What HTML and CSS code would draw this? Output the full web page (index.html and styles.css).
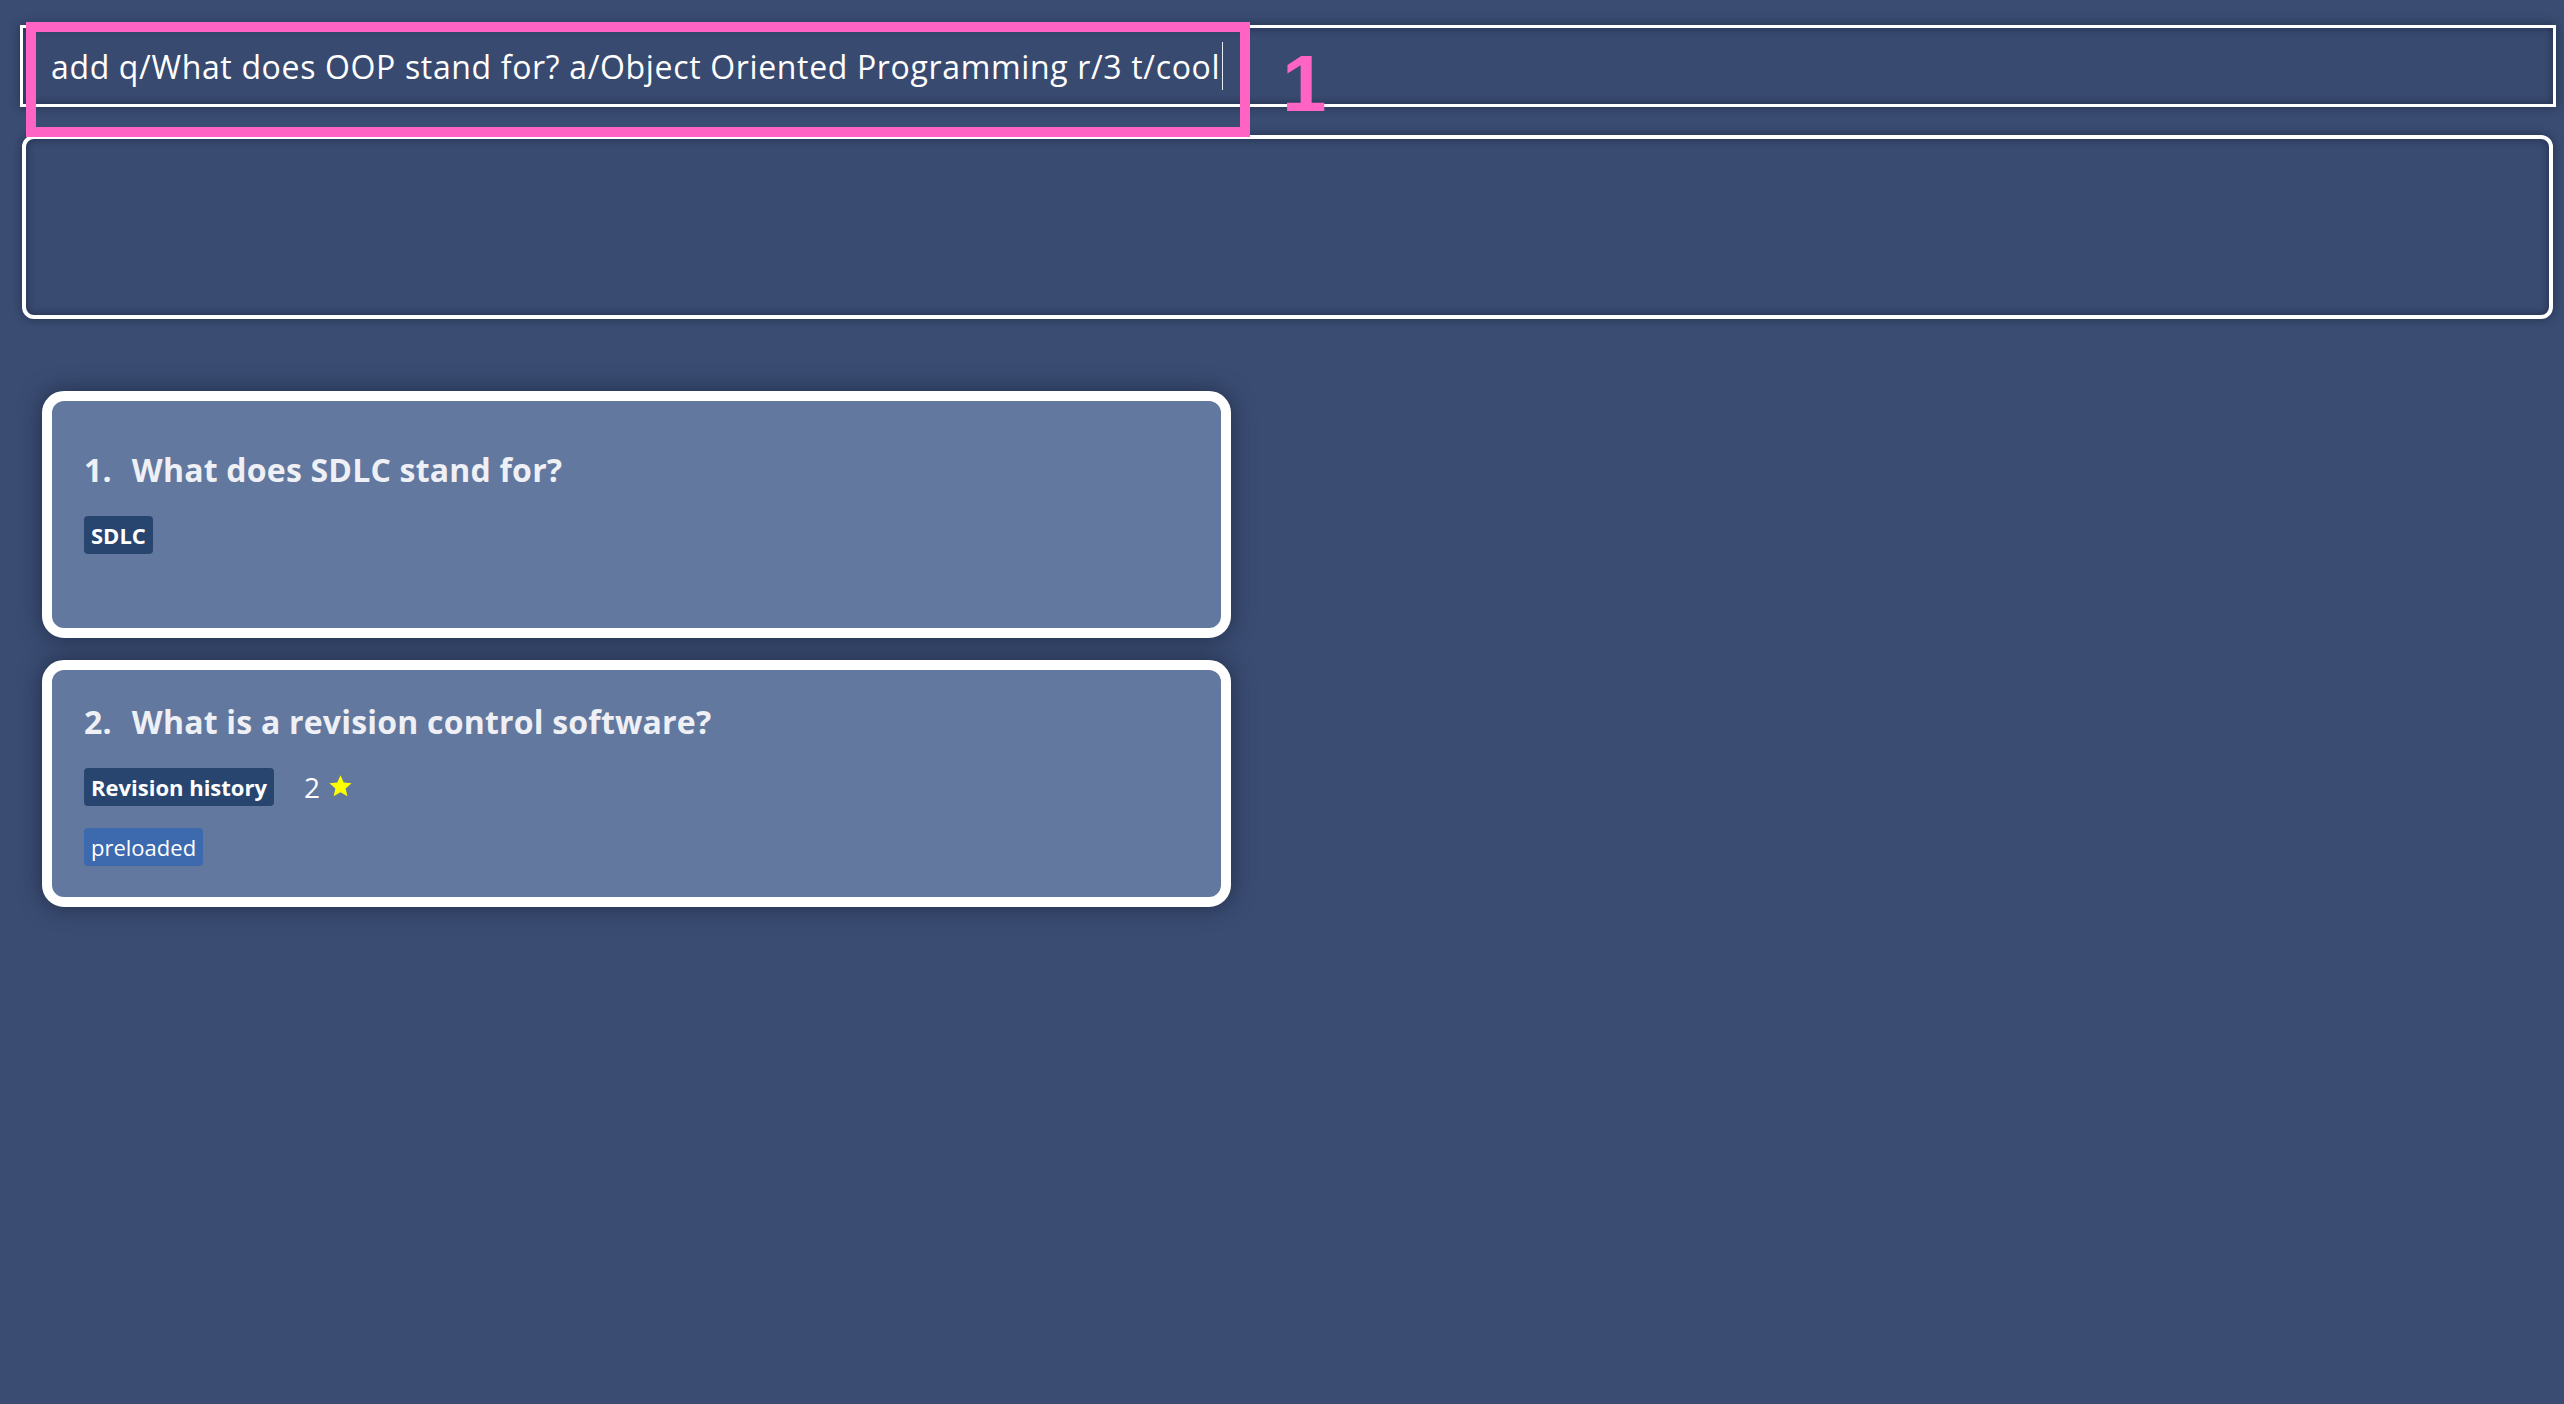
FILE: index.html
```html
<!DOCTYPE html>
<html lang="en">
<head>
<meta charset="utf-8">
<title>Flashcards</title>
<link rel="stylesheet" href="styles.css">
</head>
<body>
<div class="app">
  <div class="command-wrap">
    <div class="command-box">
      <span class="cmd-text">add q/What does OOP stand for? a/Object Oriented Programming r/3 t/cool</span><span class="caret"></span>
    </div>
    <div class="highlight"></div>
    <div class="step">1</div>
  </div>

  <div class="result-box"></div>

  <div class="card-list">
    <div class="card">
      <div class="card-title"><span class="card-index">1.</span>What does SDLC stand for?</div>
      <div class="card-row">
        <span class="tag">SDLC</span>
      </div>
      <div class="card-spacer"></div>
    </div>

    <div class="card">
      <div class="card-title"><span class="card-index">2.</span>What is a revision control software?</div>
      <div class="card-row">
        <span class="tag">Revision history</span>
        <span class="rating">2</span>
        <svg class="star" viewBox="0 0 24 24" width="25" height="24" aria-hidden="true">
          <path d="M12 1.2l3.2 7.3 7.9.7-6 5.3 1.8 7.8L12 18.2l-6.9 4.1 1.8-7.8-6-5.3 7.9-.7z" fill="#ffff00"/>
        </svg>
      </div>
      <div class="card-row second">
        <span class="tag preloaded">preloaded</span>
      </div>
    </div>
  </div>
</div>
</body>
</html>
```

FILE: styles.css
```css
html, body {
  margin: 0;
  padding: 0;
}

body {
  background: #3a4c72;
  width: 2564px;
  height: 1404px;
  overflow: hidden;
  font-family: "Open Sans", "Noto Sans", sans-serif;
}

.app {
  padding-top: 25px;
}

.command-wrap {
  position: relative;
  margin-left: 20px;
  margin-right: 8px;
}

.command-box {
  box-sizing: border-box;
  height: 82px;
  border: 3px solid #ffffff;
  background: #394a70;
  box-shadow: 0 0 10px rgba(10, 18, 35, 0.45), inset 0 0 8px rgba(10, 18, 35, 0.5);
  display: flex;
  align-items: center;
  padding-left: 28px;
}

.cmd-text {
  font-family: "Open Sans", "Noto Sans", sans-serif;
  font-size: 32px;
  letter-spacing: 0.65px;
  color: #ffffff;
  white-space: pre;
}

.caret {
  display: inline-block;
  width: 1px;
  height: 48px;
  margin-left: 2px;
  background: #e8ecf5;
}

.highlight {
  position: absolute;
  left: 6px;
  top: -3px;
  width: 1224px;
  height: 115px;
  box-sizing: border-box;
  border: 10px solid #ff63c3;
}

.step {
  position: absolute;
  left: 1262px;
  top: 19px;
  font-family: "Liberation Sans", "Arial", sans-serif;
  font-weight: 700;
  font-size: 80px;
  line-height: 1;
  color: #ff63c3;
}

.result-box {
  box-sizing: border-box;
  height: 184px;
  margin: 28px 11px 0 22px;
  border: 4px solid #ffffff;
  border-radius: 12px;
  background: #394b71;
  box-shadow: 0 0 10px rgba(10, 18, 35, 0.45), inset 0 0 8px rgba(10, 18, 35, 0.5);
}

.card-list {
  margin-top: 72px;
  padding-left: 42px;
  display: flex;
  flex-direction: column;
  gap: 22px;
}

.card {
  box-sizing: border-box;
  width: 1189px;
  height: 247px;
  border: 10px solid #ffffff;
  border-radius: 22px;
  background: #62789f;
  box-shadow: 0 0 22px rgba(14, 22, 42, 0.55);
  padding: 0 32px;
  display: flex;
  flex-direction: column;
  justify-content: center;
}

.card-title {
  font-weight: 700;
  font-size: 32px;
  line-height: 40px;
  letter-spacing: 0.2px;
  color: #eef0f5;
}

.card-index {
  margin-right: 20px;
}

.card-row {
  display: flex;
  align-items: center;
  margin-top: 26px;
}

.card-row.second {
  margin-top: 22px;
}

.card-spacer {
  height: 26px;
}

.tag {
  box-sizing: border-box;
  height: 38px;
  display: inline-flex;
  align-items: center;
  padding: 0 7px;
  border-radius: 4px;
  background: #28456f;
  color: #ffffff;
  font-weight: 700;
  font-size: 22px;
}

.tag.preloaded {
  background: #3d69ae;
  font-weight: 400;
}

.rating {
  margin-left: 30px;
  font-size: 28px;
  color: #ffffff;
}

.star {
  margin-left: 8px;
  margin-top: -2px;
}
```
